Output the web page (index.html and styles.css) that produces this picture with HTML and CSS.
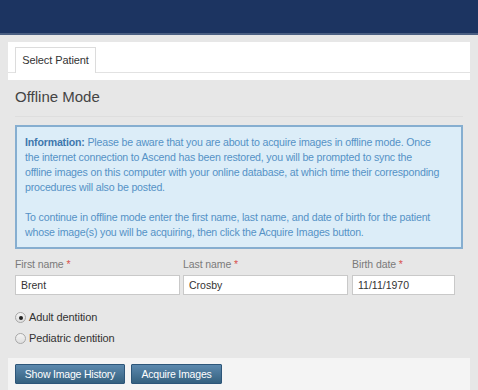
FILE: index.html
```html
<!DOCTYPE html>
<html>
<head>
<meta charset="utf-8">
<link rel="stylesheet" href="styles.css">
</head>
<body>
<header class="topbar"></header>
<div class="panel">
  <div class="tabs">
    <div class="tab">Select Patient</div>
  </div>
  <div class="tabs-foot"></div>
</div>
<main class="content">
  <h1 class="title">Offline Mode</h1>
  <div class="info">
    <p><b>Information:</b> Please be aware that you are about to acquire images in offline mode. Once<br>the internet connection to Ascend has been restored, you will be prompted to sync the<br>offline images on this computer with your online database, at which time their corresponding<br>procedures will also be posted.</p>
    <p>To continue in offline mode enter the first name, last name, and date of birth for the patient<br>whose image(s) you will be acquiring, then click the Acquire Images button.</p>
  </div>
  <div class="fields">
    <div class="field f-first">
      <label>First name <span class="req">*</span></label>
      <input type="text" value="Brent">
    </div>
    <div class="field f-last">
      <label>Last name <span class="req">*</span></label>
      <input type="text" value="Crosby">
    </div>
    <div class="field f-birth">
      <label>Birth date <span class="req">*</span></label>
      <input type="text" value="11/11/1970">
    </div>
  </div>
  <div class="radios">
    <label class="radio"><span class="dot on"></span>Adult dentition</label>
    <label class="radio"><span class="dot"></span>Pediatric dentition</label>
  </div>
</main>
<footer class="actions">
  <button class="btn b1">Show Image History</button>
  <button class="btn b2">Acquire Images</button>
</footer>
</body>
</html>
```
FILE: styles.css
```css
html, body { margin: 0; padding: 0; }
body {
  background: #e7e7e7;
  font-family: "Liberation Sans", Arial, sans-serif;
  width: 478px;
  height: 390px;
  overflow: hidden;
}
.topbar {
  height: 33px;
  background: #1c3461;
  border-bottom: 2px solid #4a5f82;
}
.panel {
  margin: 7px 8px 0 8px;
  background: #fff;
}
.tabs {
  height: 30px;
  border-bottom: 1px solid #e2e2e2;
  display: flex;
  align-items: flex-end;
  padding-left: 7px;
}
.tab {
  width: 79px;
  height: 25px;
  border: 1px solid #dcdcdc;
  border-bottom: none;
  background: #fff;
  margin-bottom: -1px;
  font-size: 11px;
  color: #333;
  line-height: 25px;
  text-align: center;
  letter-spacing: -0.1px;
}
.tabs-foot { height: 7px; }
.content { padding: 0 15px; }
.title {
  margin: 0;
  font-weight: normal;
  font-size: 15px;
  color: #444;
  padding: 8px 0 11px 0;
  border-bottom: 1px solid #dedede;
}
.info {
  margin-top: 8px;
  border: 2px solid #86aed0;
  background: #dcedf8;
  padding: 8px 2px 7px 8px;
  box-sizing: border-box;
  width: 448px;
  color: #5592c6;
  font-size: 10.6px;
  letter-spacing: -0.18px;
  line-height: 15px;
}
.info p { margin: 0; white-space: nowrap; }
.info p + p { margin-top: 15px; }
.info b { color: #3f78ad; }
.fields {
  display: flex;
  margin-top: 8px;
}
.field { display: flex; flex-direction: column; }
.field label {
  font-size: 10.5px;
  color: #7a7a7a;
  line-height: 14px;
  margin-bottom: 4px;
  letter-spacing: -0.1px;
}
.req { color: #d9534f; }
.field input {
  height: 20px;
  box-sizing: border-box;
  border: 1px solid #c9c9c9;
  padding: 0 5px;
  font-family: "Liberation Sans", Arial, sans-serif;
  font-size: 10.5px;
  color: #333;
  margin: 0;
  outline: none;
}
.f-first input { width: 165px; }
.f-last { margin-left: 3px; }
.f-last input { width: 165px; }
.f-birth { margin-left: 4px; }
.f-birth input { width: 103px; }
.radios {
  margin-top: 16px;
  display: flex;
  flex-direction: column;
  gap: 8px;
}
.radio {
  display: flex;
  align-items: center;
  font-size: 11px;
  color: #333;
  line-height: 13px;
  letter-spacing: -0.1px;
}
.dot {
  width: 9px;
  height: 9px;
  border: 1px solid #a8a8a8;
  border-radius: 50%;
  background: linear-gradient(#f4f4f4, #dedede);
  margin-right: 3px;
  position: relative;
  box-sizing: content-box;
}
.dot.on::after {
  content: "";
  position: absolute;
  left: 2.5px;
  top: 2.5px;
  width: 4px;
  height: 4px;
  border-radius: 50%;
  background: #222;
}
.actions {
  margin: 13px 8px 0 8px;
  background: #f4f4f4;
  height: 40px;
  padding: 6px 7px 0 7px;
  box-sizing: border-box;
  display: flex;
  align-items: flex-start;
  gap: 6px;
}
.btn {
  height: 20px;
  border: 1px solid #2d5679;
  background: linear-gradient(#5c89ae, #35617f);
  color: #fff;
  font-family: "Liberation Sans", Arial, sans-serif;
  font-size: 10.5px;
  letter-spacing: -0.2px;
  padding: 0;
  margin: 0;
  border-radius: 1px;
}
.b1 { width: 110px; }
.b2 { width: 91px; }
```
